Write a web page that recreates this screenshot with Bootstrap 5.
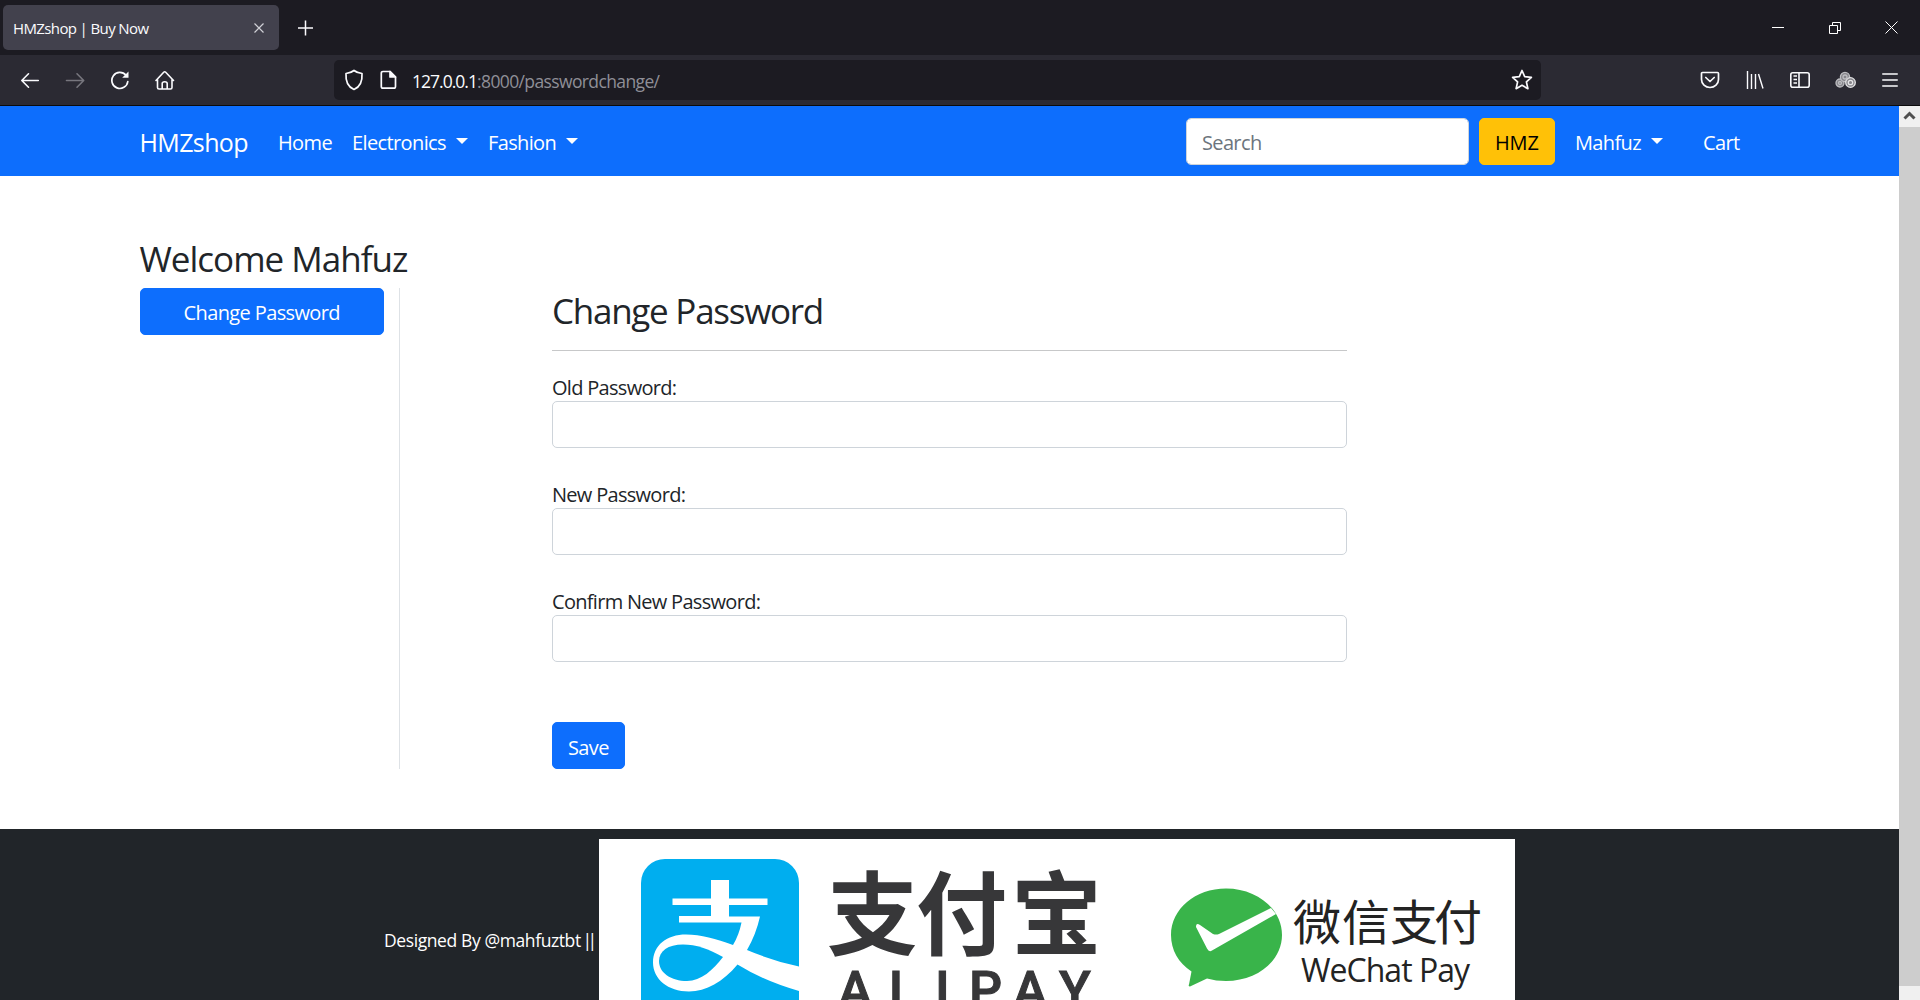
<!DOCTYPE html>
<html lang="en">
<head>
<meta charset="utf-8">
<title>HMZshop | Buy Now</title>
<link href="https://cdn.jsdelivr.net/npm/bootstrap@5.3.0/dist/css/bootstrap.min.css" rel="stylesheet">
<style>
html{font-size:20px}
body{font-family:"Open Sans","Noto Sans",sans-serif;height:1000px;overflow:hidden;letter-spacing:-.62px}
svg{display:block;flex:none}
.tabstrip{height:55px;flex:none;background:#1c1b22;padding:5px 0 5px 3px;color:#fbfbfe}
.tab-item{width:276px;height:45px;background:#42414d;border-radius:5px;padding:0 15px 0 10px;font-size:15px}
.tab-item span{padding-top:2px}
.new-tab{margin-left:15px}
.window-btns{padding-right:22px;gap:44px}
.toolbar{height:51px;flex:none;background:#2b2a33;border-bottom:1px solid #0c0c0d;color:#fbfbfe}
.tools-left{width:334px;padding-left:20px;gap:25px}
.urlbar{width:1207px;height:40px;background:#1c1b22;border-radius:5px;padding:0 8px 0 10px;gap:15px;font-size:17.5px}
.url-text{padding-top:3px}
.url-host{letter-spacing:-.98px}
.url-rest{color:#8f8f97}
.tools-right{padding-right:19px;gap:25px}
.page{width:1899px}
.container{max-width:1650px}
.site-nav{height:70px}
.site-nav .nav-link,.site-nav .navbar-brand{color:#fff}
.site-nav .nav-link{padding-top:12px;padding-bottom:8px}
.site-nav .navbar-brand{padding-top:8px;padding-bottom:4px}
.btn,.form-control{border-radius:5px;height:47px;letter-spacing:inherit;padding-top:8.500px;padding-bottom:4px}
.form-control{border-color:#ced4da}
.form-control::placeholder{color:#6c757d}
.search-box{width:283px;padding-bottom:6px}
.hmz-btn{color:#000;width:76px;letter-spacing:-.1px}
.dropdown-toggle::after{margin-left:10px;vertical-align:6px}
.page h3{height:42px;padding-top:2px;margin-bottom:10px}
.hello{letter-spacing:-.99px}
.account-form h3{letter-spacing:-1.260px}
.account-form hr{margin:20px 0;opacity:.25}
.account-form .field{margin-bottom:30px}
.account-form label{height:30px;padding-top:2px;letter-spacing:-.7px}
.account-form .btn{margin-top:30px}
.side{border-right:1px solid #dee2e6;width:275.500px;margin-right:-.5px}
.site-footer{background:#212529;color:#fff;padding:10px 0 0 384px;font-size:17.5px;height:171px}
.credit{padding-top:88px;width:215px;letter-spacing:-.4px;white-space:nowrap}
.bars{letter-spacing:-4.600px;margin-left:-2.500px}
.scroll{width:21px;background:#f0f0f0}
.thumb{height:859px;background:#cdcdcd}
.zh-bold{font:700 91px "Noto Sans CJK SC",sans-serif;letter-spacing:0}
.zh-thin{font:400 48px "Noto Sans CJK SC",sans-serif;letter-spacing:0}
.latin-bold{font:500 52px Roboto,sans-serif;letter-spacing:0;stroke:#373739;stroke-width:1}
.latin-thin{font:400 32px "Open Sans",sans-serif;letter-spacing:0}
</style>
</head>
<body class="d-flex flex-column">
<div class="tabstrip d-flex align-items-center">
  <div class="tab-item d-flex align-items-center justify-content-between"><span>HMZshop | Buy Now</span>
    <svg width="10" height="10" viewBox="0 0 10 10" stroke="#d0d0d6" stroke-width="1.2"><path d="M.5.5l9 9M9.500.500l-9 9"/></svg></div>
  <svg class="new-tab" width="22" height="16" viewBox="0 0 22 16" stroke="#fbfbfe" stroke-width="1.500"><path d="M11.500 .5v15M4 8h15"/></svg>
  <div class="window-btns ms-auto d-flex align-items-center">
    <svg width="13" height="14" viewBox="0 0 13 14" stroke="#fff"><path d="M0 6.500h12"/></svg>
    <svg width="12" height="12" viewBox="0 0 12 12" fill="none" stroke="#fff"><path d="M.5 3.500h8v8h-8zM3.500 3.500v-3h8v8h-3"/></svg>
    <svg width="13" height="13" viewBox="0 0 13 13" stroke="#fff"><path d="M.5.5l12 12M12.500.5l-12 12"/></svg>
  </div>
</div>
<div class="toolbar d-flex align-items-center">
  <div class="tools-left d-flex align-items-center">
    <svg width="20" height="20" viewBox="0 0 20 20" fill="none" stroke="#fbfbfe" stroke-width="1.600" stroke-linecap="round" stroke-linejoin="round"><path d="M18.300 10.500H2M8.500 3.800L1.800 10.500l6.700 6.700"/></svg>
    <svg width="20" height="20" viewBox="0 0 20 20" fill="none" stroke="#77767e" stroke-width="1.600" stroke-linecap="round" stroke-linejoin="round"><path d="M1.500 10.500h17M12 3.800l6.700 6.700-6.700 6.700"/></svg>
    <svg width="20" height="20" viewBox="0 0 20 20" fill="none" stroke="#fbfbfe" stroke-width="1.700" stroke-linecap="round"><path d="M17.800 11.500A8 8 0 1 1 16 5.300"/><path d="M18.500 1.500v6.300h-6.300z" fill="#fbfbfe" stroke="none"/></svg>
    <svg width="20" height="20" viewBox="0 0 20 20" fill="none" stroke="#fbfbfe" stroke-width="1.600" stroke-linecap="round" stroke-linejoin="round"><path d="M1 10.500L8.700 2.200q1-1 2 0L18.500 10.500M2.500 9.500v8q0 1.500 1.500 1.500h11.500q1.500 0 1.500-1.500v-8M7.200 19v-5.500q0-1.800 2.500-1.800t2.500 1.800V19"/></svg>
  </div>
  <div class="urlbar d-flex align-items-center">
    <svg width="20" height="22" viewBox="0 0 20 22" fill="none" stroke="#fbfbfe" stroke-width="1.700" stroke-linejoin="round"><path d="M10 1.500Q13 4 18 4.500C18.500 12 16 18 10 20.500C4 18 1.500 12 2 4.500Q7 4 10 1.500z"/></svg>
    <svg width="18" height="20" viewBox="0 0 18 20" fill="none" stroke="#fbfbfe" stroke-width="1.700" stroke-linejoin="round"><path d="M4 1.500h7l5.500 5.500v9.500q0 1.700-1.700 1.700H4q-1.700 0-1.700-1.700V3.200q0-1.700 1.700-1.700z"/><path d="M11 1.500v5.500h5.500z" fill="#fbfbfe"/></svg>
    <span class="url-text"><span class="url-host">127.0.0.1</span><span class="url-rest">:8000/passwordchange/</span></span>
    <svg class="ms-auto" width="22" height="22" viewBox="0 0 22 22" fill="none" stroke="#fbfbfe" stroke-width="1.700" stroke-linejoin="round"><path d="M11 1.500l2.700 6.200 6.700.6-5 4.600 1.500 6.800L11 16.300l-5.900 3.400 1.500-6.800-5-4.600 6.700-.6z"/></svg>
  </div>
  <div class="tools-right d-flex align-items-center ms-auto">
    <svg width="20" height="20" viewBox="0 0 20 20" fill="none" stroke="#fbfbfe" stroke-width="1.700" stroke-linecap="round" stroke-linejoin="round"><path d="M2.500 2.500h15q1 0 1 1V9.500a8.500 8 0 0 1-17 0V3.500q0-1 1-1zM5.800 7.500L10 11.500l4.200-4"/></svg>
    <svg width="20" height="20" viewBox="0 0 20 20" fill="none" stroke="#fbfbfe" stroke-width="1.400"><path d="M2.500 1v18M6.500 4v15M10.500 4v15M13.500 4l4.500 14.500"/></svg>
    <svg width="20" height="20" viewBox="0 0 20 20" fill="none" stroke="#fbfbfe" stroke-width="1.600"><rect x=".8" y="2.800" width="18.400" height="14.400" rx="2"/><path d="M9 2.800v14.400M3.500 6h3.500M3.500 9.500h3.500M3.500 13h3.500"/></svg>
    <svg width="21" height="20" viewBox="0 0 21 20" fill="#86858b" stroke="#bdbdc1" stroke-width="1.300"><circle cx="5" cy="13" r="4"/><circle cx="10" cy="7" r="4.600"/><circle cx="15.500" cy="12.500" r="4.800" stroke="#e4e4e6"/><circle cx="10" cy="7" r="2"/><circle cx="5" cy="13" r="1.500"/><circle cx="15.500" cy="12.500" r="2.200" stroke="#e4e4e6"/></svg>
    <svg width="20" height="20" viewBox="0 0 20 20" stroke="#fbfbfe" stroke-width="1.600" stroke-linecap="round"><path d="M1.800 4h14.400M1.800 10h14.400M1.800 16h14.400"/></svg>
  </div>
</div>
<div class="d-flex flex-fill">
<div class="page bg-white">
  <nav class="navbar navbar-expand bg-primary site-nav">
    <div class="container">
      <a class="navbar-brand" href="#">HMZshop</a>
      <ul class="navbar-nav me-auto">
        <li class="nav-item"><a class="nav-link" href="#">Home</a></li>
        <li class="nav-item"><a class="nav-link dropdown-toggle" href="#">Electronics</a></li>
        <li class="nav-item"><a class="nav-link dropdown-toggle" href="#">Fashion</a></li>
      </ul>
      <form class="d-flex"><input class="form-control me-2 search-box" placeholder="Search"><button class="btn btn-warning hmz-btn" type="button">HMZ</button></form>
      <ul class="navbar-nav">
        <li class="nav-item mx-2"><a class="nav-link dropdown-toggle" href="#">Mahfuz</a></li>
        <li class="nav-item mx-2"><a class="nav-link" href="#">Cart</a></li>
      </ul>
    </div>
  </nav>
  <main class="container my-5">
    <h3 class="hello">Welcome Mahfuz</h3>
    <div class="row">
      <div class="col-2 side"><a class="btn btn-primary w-100" href="#">Change Password</a></div>
      <div class="col-6 offset-1 account-form">
        <h3>Change Password</h3>
        <hr>
        <div class="field"><label class="d-block" for="old">Old Password:</label><input id="old" type="password" class="form-control"></div>
        <div class="field"><label class="d-block" for="new">New Password:</label><input id="new" type="password" class="form-control"></div>
        <div class="field"><label class="d-block" for="again">Confirm New Password:</label><input id="again" type="password" class="form-control"></div>
        <button class="btn btn-primary" type="button">Save</button>
      </div>
    </div>
  </main>
  <footer class="site-footer d-flex">
    <span class="credit">Designed By @mahfuztbt <span class="bars">||</span></span>
    <svg width="916" height="161" viewBox="599 839 916 161">
      <rect x="599" y="839" width="916" height="161" fill="#fff"/>
      <!-- Alipay mark -->
      <path d="M641 1010V883a24 24 0 0 1 24-24h110a24 24 0 0 1 24 24v127z" fill="#00aeef"/>
      <path fill="#fff" d="M711 880h18v18.500h38.500v6.500H729v11.500h31q-4 18-13 33.500q26 11 52 16.500V991q-35-10-61.500-26.500C723 982 706 991.500 689 991.500C668 991.500 653 979 653 962.500C653 945 667 934.500 686 934.500C701 934.500 716 939 733 945q6-10 8.500-22.500H679v-6.500h32v-11H672.500v-6.500H711z"/>
      <path fill="#00aeef" d="M723 957C709 949 696 944.500 683 944.500C668 944.500 659 951 659 961C659 973 671 981 687 981C701 981 713 970 723 957z"/>
      <g fill="#373739">
        <text class="zh-bold" x="827 916 1011" y="948">支付宝</text>
        <text class="latin-bold" x="838 889 935 969 1013 1059" y="1008">ALIPAY</text>
      </g>
      <!-- WeChat Pay mark -->
      <path fill="#39b44a" d="M1226 888.500c31 0 56 20.500 56 46.500s-25 46-56 46q-10 0-19-2.500l-17 8q-2 0-1-2l2.500-13C1178.500 963 1171 950 1171 935c0-26 24.500-46.500 55-46.500z"/>
      <path fill="#fff" d="M1196 927q0-5 4-2l13 9q3 1 6 0L1271 908l5 6L1212 950.500q-3 2-5-2z"/>
      <g fill="#232323">
        <text class="zh-thin" x="1293 1342 1390 1434" y="940">微信支付</text>
        <text class="latin-thin" x="1301" y="981.500" textLength="169">WeChat Pay</text>
      </g>
    </svg>
  </footer>
</div>
<div class="scroll"><svg width="21" height="21" viewBox="0 0 21 21" fill="none" stroke="#505050" stroke-width="3"><path d="M5.500 12.500l5-5 5 5"/></svg><div class="thumb"></div></div>
</div>
<script src="https://cdn.jsdelivr.net/npm/bootstrap@5.3.0/dist/js/bootstrap.bundle.min.js"></script>
</body>
</html>
